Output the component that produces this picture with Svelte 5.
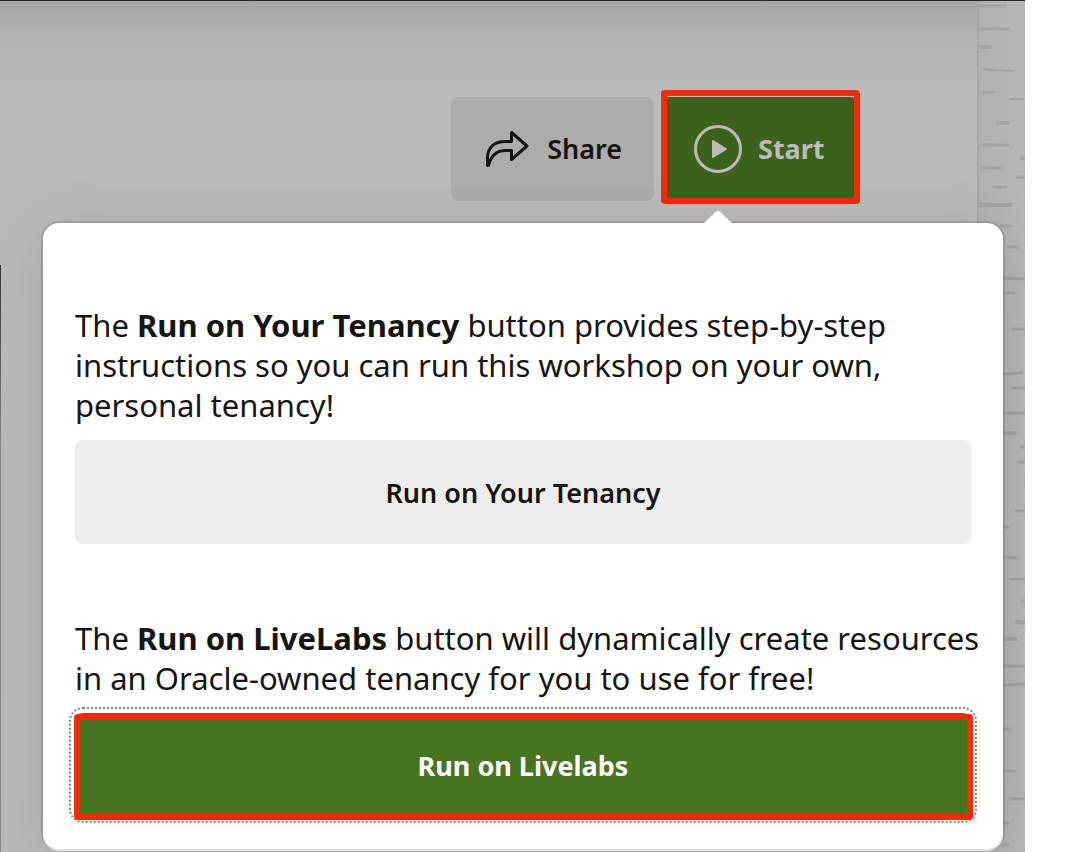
<script>
  // Bark marks of the side texture: [x, y, length, thickness, tilt]
  const marks = [
    [0, 5, 26, 3, 0], [1, 28, 29, 3, 0], [0, 46, 11, 4, 0], [5, 68, 9, 3, 1], [14, 69, 20, 2, 1],
    [0, 92, 15, 3, -1], [32, 98, 16, 2, 0], [19, 122, 10, 4, 0], [3, 144, 26, 3, 0], [43, 157, 6, 4, -1],
    [0, 167, 24, 3, 0], [38, 176, 12, 3, 0], [15, 186, 12, 3, 0], [0, 204, 32, 4, 0], [22, 225, 10, 3, 0],
    [29, 246, 10, 3, 0], [24, 277, 24, 3, 1], [24, 292, 11, 3, 0], [34, 328, 14, 3, 0], [24, 373, 18, 3, -1],
    [34, 387, 14, 3, 0], [24, 412, 24, 3, 0], [24, 432, 12, 4, 0], [42, 446, 6, 3, 0], [40, 461, 8, 3, 0],
    [46, 480, 3, 3, 0], [37, 510, 11, 3, 0], [24, 526, 5, 3, 0], [24, 556, 15, 3, 1], [31, 578, 17, 2, 0],
    [43, 600, 5, 3, 0], [38, 621, 10, 4, 1], [24, 638, 13, 4, 0], [24, 665, 24, 3, 0], [24, 684, 24, 3, -1],
    [24, 728, 7, 3, 0], [24, 770, 11, 3, 0], [32, 798, 16, 3, 0], [24, 822, 5, 3, 0], [24, 844, 5, 3, 0]
  ];
</script>

<div class="page">
  <svg class="bark" aria-hidden="true">
    {#each marks as [x, y, length, thickness, tilt]}
      <line x1={x} y1={y} x2={x + length} y2={y + tilt} stroke-width={thickness} />
    {/each}
  </svg>

  <div class="toolbar">
    <button class="btn share" type="button">
      <svg class="icon" viewBox="0 0 48 48" aria-hidden="true">
        <path
          d="M28.500 7.500 44 21 28.500 34.500V25.500H23C14 25.500 8 30 5.500 40.500H4.500V33C4.500 22 12 16.500 22 16.500H28.500Z"
          fill="none" stroke="currentColor" stroke-width="3" stroke-linejoin="round"
        />
      </svg>
      Share
    </button>
    <button class="btn start marked" type="button" aria-expanded="true">
      <svg class="icon" viewBox="0 0 48 48" aria-hidden="true">
        <circle cx="24" cy="24" r="22.500" fill="none" stroke="currentColor" stroke-width="3" />
        <path d="M19 16 32 24 19 32Z" fill="currentColor" stroke="currentColor" stroke-width="2" stroke-linejoin="round" />
      </svg>
      Start
    </button>
  </div>

  <section class="popover">
    <svg class="arrow" viewBox="0 0 32 16" aria-hidden="true">
      <path d="M1 14 14 1.500Q16 0 18 1.500L31 14V16H1Z" fill="#fff" stroke="#d2d1d0" />
      <rect y="13" width="32" height="3" fill="#fff" />
    </svg>
    <p>
      The <strong>Run on Your Tenancy</strong> button provides step-by-step instructions so you can
      run this workshop on your own, personal tenancy!
    </p>
    <button class="btn wide" type="button">Run on Your Tenancy</button>
    <p class="second">
      The <strong>Run on LiveLabs</strong> button will dynamically create resources in an
      Oracle-owned tenancy for you to use for free!
    </p>
    <button class="btn wide primary marked" type="button">Run on Livelabs</button>
  </section>
</div>

<style>
  :global(body) {
    margin: 0;
    background: #fff;
  }

  .page {
    position: relative;
    box-sizing: border-box;
    min-height: 100vh;
    margin-right: 41px;
    padding: 96px 22px 3px 43px;
    overflow: hidden;
    border-top: 1px solid #2a2627;
    background: linear-gradient(#a7a6a5, #b4b3b1 40px, #bbbab8 90px, #bbbab8);
    color: #161513;
    font-family: "Noto Sans", "Open Sans", sans-serif;
  }

  .page::before {
    content: "";
    position: absolute;
    top: 264px;
    bottom: 0;
    left: 0;
    width: 1px;
    background: linear-gradient(#333, #858483 180px, #8c8b8a);
  }

  .bark {
    position: absolute;
    top: 0;
    right: 0;
    box-sizing: border-box;
    width: 48px;
    height: 100%;
    border-left: 2px solid #a7a6a5;
    background: linear-gradient(90deg, #b1b0ae, #b8b7b5);
    stroke: #a5a4a2;
    stroke-linecap: round;
  }

  .toolbar {
    display: flex;
    justify-content: flex-end;
    gap: 8px;
    margin: 0 145px 22px 0;
  }

  .btn {
    position: relative;
    display: flex;
    align-items: center;
    justify-content: center;
    gap: 16px;
    box-sizing: border-box;
    height: 104px;
    padding: 0 32px;
    border: 0;
    border-radius: 8px;
    background: #ededeb;
    color: inherit;
    font: 600 27px/40px "Noto Sans", "Open Sans", sans-serif;
    white-space: nowrap;
    cursor: pointer;
  }

  .icon {
    flex: none;
    width: 48px;
    height: 48px;
  }

  .share {
    background: #adacaa;
  }

  .start {
    justify-content: flex-start;
    min-width: 196px;
    background: #3c621b;
    color: #bcbbb9;
    font-weight: 700;
  }

  .wide {
    width: 100%;
    padding-top: 2px;
  }

  .primary {
    outline: 2px dotted #7d9470;
    outline-offset: 4px;
    background: #48751f;
    color: #fff;
    font-weight: 700;
  }

  .marked::after {
    content: "";
    position: absolute;
    inset: 1px -2px -3px -1px;
    border: 6px solid #ff2800;
    border-radius: 4px;
  }

  .start::after {
    inset: -7px -2px -3px -1px;
  }

  .popover {
    position: relative;
    padding: 82px 32px 32px;
    border-radius: 16px;
    background: #fff;
    box-shadow:
      0 0 0 2px rgba(0, 0, 0, 0.12),
      0 2px 0 #fff,
      0 12px 64px rgba(0, 0, 0, 0.12);
  }

  .arrow {
    position: absolute;
    top: -13px;
    right: 269px;
    width: 32px;
    height: 16px;
  }

  p {
    margin: 0 -16px 15px 0;
    font-size: 31px;
    line-height: 40px;
  }

  strong {
    font-weight: 700;
  }

  .second {
    margin-top: 74px;
  }
</style>
